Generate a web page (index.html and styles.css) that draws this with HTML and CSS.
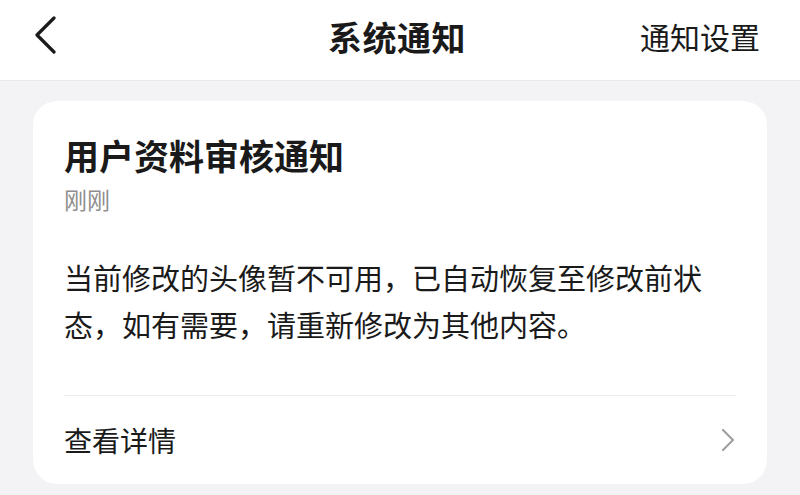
FILE: index.html
```html
<!DOCTYPE html>
<html lang="zh-CN">
<head>
  <meta charset="UTF-8" />
  <meta name="viewport" content="width=device-width, initial-scale=1.0"/>
  <title>系统通知</title>
  <link rel="stylesheet" href="styles.css">
</head>
<body>
  <header class="nav-bar">
    <button class="btn-back" aria-label="返回">
      <svg width="24" height="40" viewBox="0 0 24 40">
        <polyline points="20,2 3,19 20,36" fill="none" stroke="#1a1a1a" stroke-width="3.2" stroke-linecap="round" stroke-linejoin="round"/>
      </svg>
    </button>
    <h1 class="nav-title">系统通知</h1>
    <a class="nav-action">通知设置</a>
  </header>

  <main class="content">
    <div class="notice-card">
      <h2 class="notice-title">用户资料审核通知</h2>
      <div class="notice-time">刚刚</div>
      <p class="notice-body">当前修改的头像暂不可用，已自动恢复至修改前状态，如有需要，请重新修改为其他内容。</p>
      <div class="notice-footer">
        <span>查看详情</span>
        <svg width="16" height="26" viewBox="0 0 16 26">
          <polyline points="3,3 13,13 3,23" fill="none" stroke="#a0a0a0" stroke-width="2.2" stroke-linecap="round" stroke-linejoin="round"/>
        </svg>
      </div>
    </div>
  </main>
</body>
</html>
```

FILE: styles.css
```css
* {
  box-sizing: border-box;
}

body {
  margin: 0;
  font-family: "Noto Sans CJK SC", "Noto Sans", sans-serif;
  background-color: #f3f3f5;
  color: #1a1a1a;
}

.nav-bar {
  height: 81px;
  background: white;
  border-bottom: 1px solid #e9e9ec;
  display: grid;
  grid-template-columns: 1fr auto 1fr;
  align-items: center;
  padding: 0 40px 8px 34px;
}

.btn-back {
  background: none;
  border: none;
  padding: 0;
  width: 24px;
  height: 40px;
  cursor: pointer;
}

.nav-title {
  margin: 0;
  font-size: 34px;
  font-weight: 700;
  letter-spacing: 0.5px;
}

.nav-action {
  justify-self: end;
  font-size: 30px;
  color: #1a1a1a;
}

.content {
  padding: 20px 33px;
}

.notice-card {
  background: white;
  border-radius: 24px;
  padding: 32px 31px 0;
}

.notice-title {
  margin: 0;
  font-size: 35px;
  line-height: 44px;
  font-weight: 700;
}

.notice-time {
  margin-top: 7px;
  font-size: 23px;
  line-height: 30px;
  color: #8e8e8e;
}

.notice-body {
  margin: 40px 0 0;
  font-size: 29px;
  line-height: 47px;
  padding-bottom: 47px;
  border-bottom: 1px solid #ececee;
}

.notice-footer {
  height: 88px;
  display: flex;
  align-items: center;
  justify-content: space-between;
  font-size: 28px;
}
```
